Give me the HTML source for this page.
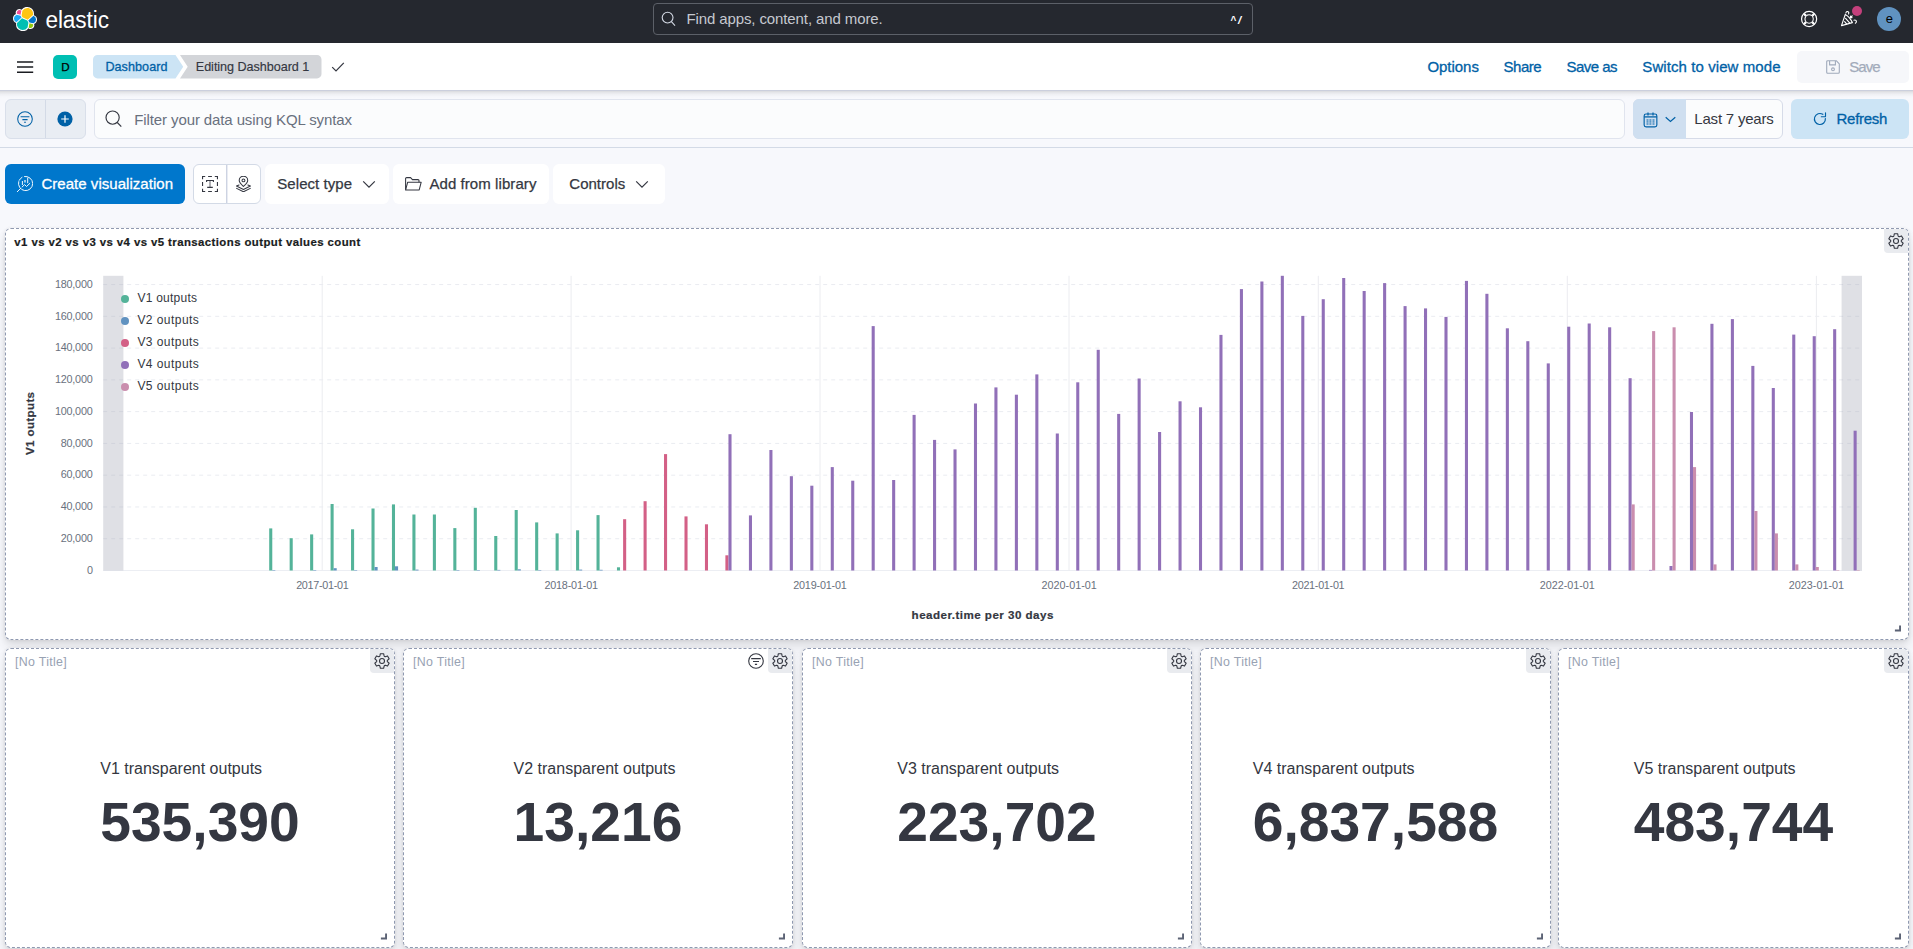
<!DOCTYPE html>
<html lang="en"><head><meta charset="utf-8"><title>Editing Dashboard 1 - Elastic</title>
<style>
html,body{margin:0;padding:0}
body{width:1913px;height:949px;overflow:hidden;position:relative;background:#f7f8fc;font-family:"Liberation Sans",sans-serif;color:#343741}
.b{position:absolute;box-sizing:border-box}
.t{position:absolute;line-height:1;white-space:nowrap}
.panel{position:absolute;box-sizing:border-box;background:#fff;border:1px dashed #8f99b0;border-radius:6px;box-shadow:0 .8px 3.6px -.9px rgba(0,0,0,.08),0 2.3px 7.2px -.9px rgba(0,0,0,.06),0 5.1px 10.8px -.9px rgba(0,0,0,.05),0 13.5px 13.5px -.9px rgba(0,0,0,.04)}
.gearbg{position:absolute;box-sizing:border-box;width:24px;height:24px;background:#e9ebef;border-radius:0 5px 0 4px}
</style></head><body>

<div class="b" style="left:0px;top:0px;width:1913px;height:43px;background:#25282f;"></div>
<svg class="b" style="left:13px;top:7px" width="24" height="24" viewBox="0 0 32 32">
<path fill="#FFF" d="M32 16.77a6.334 6.334 0 0 0-1.14-3.63 6.269 6.269 0 0 0-3.02-2.3 9.194 9.194 0 0 0 .16-1.69A9.162 9.162 0 0 0 11.4 3.81a4.84 4.84 0 0 0-7.5 5.51A6.423 6.423 0 0 0 0 15.26a6.333 6.333 0 0 0 4.18 5.95 9.077 9.077 0 0 0-.16 1.69 9.143 9.143 0 0 0 16.58 5.3 4.825 4.825 0 0 0 7.5-5.5A6.433 6.433 0 0 0 32 16.77"/>
<path fill="#FEC514" d="M12.58 13.787l7.002 3.211 7.066-6.213a7.849 7.849 0 0 0 .152-1.557c0-4.287-3.473-7.763-7.759-7.763a7.735 7.735 0 0 0-6.398 3.363l-1.176 6.126 1.113 2.833z"/>
<path fill="#00BFB3" d="M5.333 21.215a8.024 8.024 0 0 0-.15 1.575c0 4.3 3.49 7.784 7.795 7.784a7.782 7.782 0 0 0 6.42-3.39l1.166-6.073-1.556-2.973-7.03-3.2-6.645 6.277z"/>
<path fill="#F04E98" d="M5.29 9.085l4.8 1.133 1.05-5.454a3.794 3.794 0 0 0-2.3-.777 3.79 3.79 0 0 0-3.55 5.098"/>
<path fill="#1BA9F5" d="M4.874 10.227a5.349 5.349 0 0 0-3.609 5.04 5.303 5.303 0 0 0 3.417 4.966l6.734-6.087-1.237-2.641-5.305-1.278z"/>
<path fill="#93C90E" d="M20.874 27.184a3.783 3.783 0 0 0 2.304.788 3.79 3.79 0 0 0 3.553-5.097l-4.798-1.122-1.059 5.431z"/>
<path fill="#07C" d="M21.849 20.563l5.282 1.235a5.37 5.37 0 0 0 3.604-5.046 5.292 5.292 0 0 0-3.423-4.953l-6.908 6.05 1.445 2.714z"/>
</svg>
<div class="t" style="left:45.40px;top:9px;font-size:22.6px;color:#fff;letter-spacing:-0.075px;transform-origin:0 18px;transform:translateY(0.5px) scaleY(1.08);">elastic</div>
<div class="b" style="left:653px;top:3px;width:600px;height:32px;background:#25282f;border:1px solid #5c6068;border-radius:4px;"></div>
<svg class="b" style="left:661px;top:11px;" width="16" height="16" viewBox="0 0 16 16"><circle cx="6.6" cy="6.6" r="5.4" fill="none" stroke="#d4dae5" stroke-width="1.1"/><path d="M10.4 10.6 L14 14.6" stroke="#d4dae5" stroke-width="1.1" fill="none"/></svg>
<div class="t" style="left:686.40px;top:11px;font-size:15px;color:#c5c9d0;letter-spacing:-0.107px;">Find apps, content, and more.</div>
<div class="t" style="left:1230.50px;top:16px;font-size:10px;color:#fff;font-weight:700;">^</div>
<div class="t" style="left:1238.00px;top:15px;font-size:11.5px;color:#fff;font-weight:700;font-style:italic;">/</div>
<svg class="b" style="left:1800px;top:10px;" width="18" height="18" viewBox="0 0 18 18"><g fill="none" stroke="#fff"><circle cx="9.1" cy="9" r="7.55" stroke-width="1.2"/><circle cx="9.1" cy="9" r="4.05" stroke-width="1.3"/>
<path d="M12.21 12.11 L14.26 14.16 M5.99 12.11 L3.94 14.16 M5.99 5.89 L3.94 3.84 M12.21 5.89 L14.26 3.84" stroke-width="2.2"/></g><circle cx="9.1" cy="9" r="3.4" fill="#25282f"/></svg>
<svg class="b" style="left:1840px;top:10px;" width="18" height="18" viewBox="0 0 18 18"><g fill="none" stroke="#fff" stroke-width="1.15" stroke-linecap="round" stroke-linejoin="round">
<path d="M1.5 15.6 L5.3 4.4 Q9.6 6.6 12.4 12.6 Z"/><path d="M5.6 8.4 L9.6 12.9 M4.6 11.6 L6.6 13.9"/>
<path d="M5.9 3.0 Q6.3 1.2 7.9 1.6 Q9.3 2.2 8.6 4.0"/><path d="M13.9 10.2 Q15.9 9.6 16.4 11.2 Q16.6 12.6 15.4 13.2"/><path d="M10.4 7.6 L12.2 5.9 M10.4 7.6 L10.6 6.0 M10.4 7.6 L12.0 7.6"/></g></svg>
<div class="b" style="left:1851.7px;top:5.6px;width:10.6px;height:10.6px;border-radius:50%;background:#c4407c"></div>
<div class="b" style="left:1877px;top:7px;width:24px;height:24px;border-radius:50%;background:#6092c0"></div>
<div class="t" style="left:1885.80px;top:12px;font-size:13px;color:#000;">e</div>
<div class="b" style="left:0px;top:43px;width:1913px;height:47px;background:#fff;"></div>
<div class="b" style="left:0px;top:90px;width:1913px;height:1px;background:#cbcfdd;"></div>
<div class="b" style="left:0px;top:91px;width:1913px;height:7px;background:linear-gradient(to bottom, rgba(0,0,0,.125) 0, rgba(0,0,0,.105) 7%, rgba(0,0,0,.075) 21%, rgba(0,0,0,.05) 36%, rgba(0,0,0,.032) 50%, rgba(0,0,0,.018) 64%, rgba(0,0,0,.008) 80%, rgba(0,0,0,0) 100%);"></div>
<svg class="b" style="left:16px;top:59px;" width="18" height="16" viewBox="0 0 18 16"><path d="M1 2.9 H17.2 M1 8.1 H17.2 M1 13.3 H17.2" stroke="#1a1c21" stroke-width="1.5" fill="none"/></svg>
<div class="b" style="left:53px;top:55px;width:24px;height:24px;background:#00bfb3;border-radius:5px;"></div>
<div class="t" style="left:61.20px;top:61px;font-size:11.6px;color:#000;-webkit-text-stroke:0.25px #000;">D</div>
<svg class="b" style="left:93px;top:55px;" width="230" height="24" viewBox="0 0 230 24"><path d="M4.5 0 H82.5 L90.2 11.7 L82.5 23.4 H4.5 A4.5 4.5 0 0 1 0 18.9 V4.5 A4.5 4.5 0 0 1 4.5 0 Z" fill="#cce4f5"/>
<path d="M87 0 H224 A4.5 4.5 0 0 1 228.5 4.5 V18.9 A4.5 4.5 0 0 1 224 23.4 H87 L94.7 11.7 Z" fill="#d3d5d9"/></svg>
<div class="t" style="left:105.40px;top:61px;font-size:12.6px;color:#0061a6;letter-spacing:0.058px;-webkit-text-stroke:0.3px #0061a6;">Dashboard</div>
<div class="t" style="left:195.80px;top:61px;font-size:12.6px;color:#343741;letter-spacing:-0.038px;-webkit-text-stroke:0.15px #343741;">Editing Dashboard 1</div>
<svg class="b" style="left:331px;top:61px;" width="14" height="12" viewBox="0 0 14 12"><path d="M1.2 6.2 L5 10 L12.8 1.8" stroke="#343741" stroke-width="1.2" fill="none"/></svg>
<div class="t" style="left:1427.40px;top:59px;font-size:15px;color:#0061a6;letter-spacing:-0.032px;-webkit-text-stroke:0.3px #0061a6;">Options</div>
<div class="t" style="left:1503.60px;top:59px;font-size:15px;color:#0061a6;letter-spacing:-0.505px;-webkit-text-stroke:0.3px #0061a6;">Share</div>
<div class="t" style="left:1566.40px;top:59px;font-size:15px;color:#0061a6;letter-spacing:-0.516px;-webkit-text-stroke:0.3px #0061a6;">Save as</div>
<div class="t" style="left:1642.30px;top:59px;font-size:15px;color:#0061a6;letter-spacing:0.082px;-webkit-text-stroke:0.3px #0061a6;">Switch to view mode</div>
<div class="b" style="left:1797px;top:51px;width:112px;height:32px;background:#f6f7fa;border-radius:5px;"></div>
<svg class="b" style="left:1826px;top:60px;" width="14" height="14" viewBox="0 0 14 14"><g fill="none" stroke="#a0aabb" stroke-width="1.1" stroke-linejoin="round"><path d="M0.7 1.7 A1 1 0 0 1 1.7 0.7 H10.2 L13.3 3.8 V12.3 A1 1 0 0 1 12.3 13.3 H1.7 A1 1 0 0 1 0.7 12.3 Z"/><path d="M3.6 0.9 V4.9 H9.4 V0.9"/><circle cx="7" cy="9.3" r="1.4"/></g></svg>
<div class="t" style="left:1849.30px;top:59px;font-size:15px;color:#a2abba;letter-spacing:-0.962px;-webkit-text-stroke:0.25px #a2abba;">Save</div>
<div class="b" style="left:0px;top:147px;width:1913px;height:1px;background:#d3dae6;"></div>
<div class="b" style="left:5px;top:99px;width:81px;height:40px;background:#e9edf3;border:1px solid #d9dfea;border-radius:6px;"></div>
<div class="b" style="left:45px;top:100px;width:1px;height:38px;background:#d3dae6;"></div>
<svg class="b" style="left:17px;top:111px;" width="16" height="16" viewBox="0 0 16 16"><g fill="none" stroke="#0061a6" stroke-width="1.05"><circle cx="8" cy="8" r="7.3"/><path d="M3.6 5.8 H12.4 M5.4 8.6 H10.6 M7.1 11.3 H8.9"/></g></svg>
<svg class="b" style="left:57.2px;top:110.5px;" width="16" height="16" viewBox="0 0 16 16"><circle cx="8" cy="8" r="7.6" fill="#0061a6"/><path d="M8 4.2 V11.8 M4.2 8 H11.8" stroke="#fff" stroke-width="1.2"/></svg>
<div class="b" style="left:94px;top:99px;width:1531px;height:40px;background:#fbfcfd;border:1px solid #e0e4ee;border-radius:6px;"></div>
<svg class="b" style="left:105.4px;top:110.0px;" width="18" height="18" viewBox="0 0 18 18"><circle cx="7.6" cy="7.6" r="6.6" fill="none" stroke="#343741" stroke-width="1.15"/><path d="M12.3 12.5 L16.3 16.6" stroke="#343741" stroke-width="1.15" fill="none"/></svg>
<div class="t" style="left:134.30px;top:112px;font-size:15px;color:#69707d;letter-spacing:-0.110px;">Filter your data using KQL syntax</div>
<div class="b" style="left:1633px;top:99px;width:150px;height:40px;background:#fbfcfd;border:1px solid #d6dbe8;border-radius:6px;"></div>
<div class="b" style="left:1633px;top:99px;width:53px;height:40px;background:#cfdff0;border-radius:6px 0 0 6px;"></div>
<svg class="b" style="left:1642.5px;top:111.5px;" width="15" height="16" viewBox="0 0 15 16"><g fill="none" stroke="#0061a6" stroke-width="1.15"><rect x="1.15" y="2.0" width="12.7" height="12.9" rx="1.9"/><path d="M1.2 4.9 H13.8" stroke-width="1.3"/><path d="M5.0 0.4 V3.4 M10.0 0.4 V3.4" stroke-width="1.25"/></g>
<g fill="#0061a6"><rect x="3.5" y="7.5" width="2" height="1"/><rect x="6.4" y="7.5" width="2" height="1"/><rect x="9.5" y="7.5" width="2" height="1"/><rect x="3.5" y="9.45" width="2" height="1"/><rect x="6.4" y="9.45" width="2" height="1"/><rect x="9.5" y="9.45" width="2" height="1"/><rect x="3.5" y="11.5" width="2" height="1"/><rect x="6.4" y="11.5" width="2" height="1"/><rect x="9.5" y="11.5" width="2" height="1"/></g></svg>
<svg class="b" style="left:1664.5px;top:115.5px;" width="11" height="8" viewBox="0 0 11 8"><path d="M0.7 1.2 L5.45 5.5 L10.3 1.2" fill="none" stroke="#0061a6" stroke-width="1.2"/></svg>
<div class="t" style="left:1694.30px;top:111px;font-size:15px;color:#343741;letter-spacing:-0.200px;">Last 7 years</div>
<div class="b" style="left:1791px;top:99px;width:118px;height:40px;background:#cce4f5;border-radius:6px;"></div>
<svg class="b" style="left:1813px;top:111.5px;" width="14" height="14" viewBox="0 0 14 14"><g fill="none" stroke="#0061a6" stroke-width="1.15" stroke-linecap="round"><path d="M9.81 2.34 A5.5 5.5 0 1 0 12.38 6.52"/><path d="M12.5 0.7 V4.15 Q12.5 4.75 11.9 4.75 H8.3"/></g></svg>
<div class="t" style="left:1836.60px;top:111px;font-size:15px;color:#0061a6;letter-spacing:-0.302px;-webkit-text-stroke:0.3px #0061a6;">Refresh</div>
<div class="b" style="left:5px;top:164px;width:180px;height:40px;background:#0077cc;border-radius:6px;"></div>
<svg class="b" style="left:17px;top:176px;" width="16" height="16" viewBox="0 0 16 16"><g fill="none" stroke="#fff" stroke-width="0.95" stroke-linecap="round" stroke-linejoin="round"><path d="M7.56 0.47 A7.1 7.1 0 1 1 1.69 5.66"/><path d="M2.22 4.28 A7.1 7.1 0 0 1 5.0 1.35"/><path d="M3.6 12.4 L0.3 15.7"/><path d="M5.4 5.4 V8.6 M10.7 2.0 V6.8"/><path d="M8.0 4.0 V6.4" stroke-width="1.5" stroke-opacity=".8" stroke-linecap="butt"/><path d="M5.1 11 L7.6 8.6 L9.5 10.5 L12.8 7.4"/></g></svg>
<div class="t" style="left:41.40px;top:176px;font-size:15px;color:#fff;letter-spacing:0.037px;-webkit-text-stroke:0.3px #fff;">Create visualization</div>
<div class="b" style="left:193px;top:164px;width:68px;height:40px;background:#fff;border:1px solid #d3dae6;border-radius:6px;"></div>
<div class="b" style="left:226px;top:165px;width:1px;height:38px;background:#cdd3e2;"></div>
<div class="b" style="left:227px;top:165px;width:1px;height:38px;background:#e9ecf3;"></div>
<svg class="b" style="left:202px;top:176px;" width="16" height="16" viewBox="0 0 16 16"><g fill="none" stroke="#343741" stroke-width="1.1"><path d="M0.55 3.2 V0.55 H3.2 M6.1 0.55 H9.9 M12.8 0.55 H15.45 V3.2 M15.45 6.1 V9.9 M15.45 12.8 V15.45 H12.8 M9.9 15.45 H6.1 M3.2 15.45 H0.55 V12.8 M0.55 9.9 V6.1"/><path d="M4.6 5.9 V4.5 H11.4 V5.9 M5.2 11.4 H10.8"/><path d="M8 4.5 V11.4" stroke-opacity=".6" stroke-width="1.3"/></g></svg>
<svg class="b" style="left:236.1px;top:176px;" width="15" height="16.4" viewBox="0 0 15 16.4"><g fill="none" stroke="#343741" stroke-width="1.05" stroke-linejoin="round" stroke-linecap="round"><path d="M7.46 10.5 C5.2 8.3 3.2 6.4 3.2 4.4 A4.26 4.26 0 0 1 11.72 4.4 C11.72 6.4 9.7 8.3 7.46 10.5 Z"/><circle cx="7.46" cy="4.4" r="1.45"/><path d="M3.0 9.0 L0.5 10.1 L7.46 13.5 L14.4 10.1 L11.9 9.0"/><path d="M0.6 12.4 L7.46 15.8 L14.3 12.4"/></g></svg>
<div class="b" style="left:265px;top:164px;width:124px;height:40px;background:#fff;border-radius:6px;"></div>
<div class="t" style="left:277.30px;top:176px;font-size:15px;color:#343741;letter-spacing:0.060px;-webkit-text-stroke:0.25px #343741;">Select type</div>
<svg class="b" style="left:362px;top:180px;" width="14" height="9" viewBox="0 0 14 9"><path d="M1.2 1.3 L7 7.2 L12.8 1.3" fill="none" stroke="#343741" stroke-width="1.2"/></svg>
<div class="b" style="left:393px;top:164px;width:156px;height:40px;background:#fff;border-radius:6px;"></div>
<svg class="b" style="left:404.5px;top:177px;" width="17" height="14" viewBox="0 0 17 14"><g fill="none" stroke="#343741" stroke-width="1.05" stroke-linejoin="round"><path d="M0.6 12.6 V1.6 A1 1 0 0 1 1.6 0.6 H5.6 L7.4 2.6 H13 A1 1 0 0 1 14 3.6 V5.2"/><path d="M0.6 12.9 L2.7 5.2 H16.2 L14.2 12.9 Z"/></g></svg>
<div class="t" style="left:429.40px;top:176px;font-size:15px;color:#343741;letter-spacing:0.075px;-webkit-text-stroke:0.25px #343741;">Add from library</div>
<div class="b" style="left:553px;top:164px;width:112px;height:40px;background:#fff;border-radius:6px;"></div>
<div class="t" style="left:569.30px;top:176px;font-size:15px;color:#343741;letter-spacing:0.020px;-webkit-text-stroke:0.25px #343741;">Controls</div>
<svg class="b" style="left:634.5px;top:180px;" width="14" height="9" viewBox="0 0 14 9"><path d="M1.2 1.3 L7 7.2 L12.8 1.3" fill="none" stroke="#343741" stroke-width="1.2"/></svg>
<div class="panel" style="left:5px;top:228px;width:1904px;height:412px"></div>
<div class="t" style="left:14.30px;top:237px;font-size:11.4px;color:#1a1c21;font-weight:700;letter-spacing:0.419px;-webkit-text-stroke:0.2px #1a1c21;">v1 vs v2 vs v3 vs v4 vs v5 transactions output values count</div>
<div class="gearbg" style="left:1884px;top:229px"></div>
<svg class="b" style="left:1888px;top:233px;" width="16" height="16" viewBox="0 0 16 16"><g fill="none" stroke="#343741" stroke-width="1.1" stroke-linejoin="round"><path d="M5.87 2.98 L6.38 0.68 L9.62 0.68 L10.13 2.98 A1.25 1.25 0 0 0 11.28 3.65 L13.53 2.93 L15.15 5.74 L13.41 7.34 A1.25 1.25 0 0 0 13.41 8.66 L15.15 10.26 L13.53 13.07 L11.28 12.35 A1.25 1.25 0 0 0 10.13 13.02 L9.62 15.32 L6.38 15.32 L5.87 13.02 A1.25 1.25 0 0 0 4.72 12.35 L2.47 13.07 L0.85 10.26 L2.59 8.66 A1.25 1.25 0 0 0 2.59 7.34 L0.85 5.74 L2.47 2.93 L4.72 3.65 A1.25 1.25 0 0 0 5.87 2.98 Z"/><circle cx="8" cy="8" r="2.5"/></g></svg>
<svg class="b" style="left:1894px;top:625px;" width="7" height="7" viewBox="0 0 7 7"><path d="M6.05 0.5 V5.5 H0.9" fill="none" stroke="#5c6375" stroke-width="1.9"/></svg>
<svg class="b" style="left:0;top:0" width="1913" height="640" viewBox="0 0 1913 640" shape-rendering="auto"><path d="M103.2 570.50 H1862.0" stroke="#eceef3" stroke-width="1"/><path d="M103.2 538.73 H1862.0" stroke="#eaecf1" stroke-width="1" stroke-dasharray="4 4"/><path d="M103.2 506.96 H1862.0" stroke="#eaecf1" stroke-width="1" stroke-dasharray="4 4"/><path d="M103.2 475.18 H1862.0" stroke="#eaecf1" stroke-width="1" stroke-dasharray="4 4"/><path d="M103.2 443.41 H1862.0" stroke="#eaecf1" stroke-width="1" stroke-dasharray="4 4"/><path d="M103.2 411.64 H1862.0" stroke="#eaecf1" stroke-width="1" stroke-dasharray="4 4"/><path d="M103.2 379.87 H1862.0" stroke="#eaecf1" stroke-width="1" stroke-dasharray="4 4"/><path d="M103.2 348.10 H1862.0" stroke="#eaecf1" stroke-width="1" stroke-dasharray="4 4"/><path d="M103.2 316.32 H1862.0" stroke="#eaecf1" stroke-width="1" stroke-dasharray="4 4"/><path d="M103.2 284.55 H1862.0" stroke="#eaecf1" stroke-width="1" stroke-dasharray="4 4"/><path d="M322.2 275.8 V570.5" stroke="#ebecf0" stroke-width="1"/><path d="M571.1 275.8 V570.5" stroke="#ebecf0" stroke-width="1"/><path d="M820.0 275.8 V570.5" stroke="#ebecf0" stroke-width="1"/><path d="M1069.0 275.8 V570.5" stroke="#ebecf0" stroke-width="1"/><path d="M1318.3 275.8 V570.5" stroke="#ebecf0" stroke-width="1"/><path d="M1567.3 275.8 V570.5" stroke="#ebecf0" stroke-width="1"/><path d="M1816.4 275.8 V570.5" stroke="#ebecf0" stroke-width="1"/><rect x="103.2" y="275.8" width="20.2" height="294.70" fill="#a5a9b8" fill-opacity="0.36"/><rect x="1841.6" y="275.8" width="20.40" height="294.70" fill="#a5a9b8" fill-opacity="0.36"/><rect x="269.20" y="528.40" width="3.07" height="42.10" fill="#54b399"/><rect x="289.66" y="538.20" width="3.07" height="32.30" fill="#54b399"/><rect x="310.11" y="534.40" width="3.07" height="36.10" fill="#54b399"/><rect x="330.57" y="504.00" width="3.07" height="66.50" fill="#54b399"/><rect x="351.03" y="529.30" width="3.07" height="41.20" fill="#54b399"/><rect x="371.49" y="508.50" width="3.07" height="62.00" fill="#54b399"/><rect x="391.94" y="504.40" width="3.07" height="66.10" fill="#54b399"/><rect x="412.40" y="514.50" width="3.07" height="56.00" fill="#54b399"/><rect x="432.86" y="514.50" width="3.07" height="56.00" fill="#54b399"/><rect x="453.31" y="528.10" width="3.07" height="42.40" fill="#54b399"/><rect x="473.77" y="507.80" width="3.07" height="62.70" fill="#54b399"/><rect x="494.23" y="536.00" width="3.07" height="34.50" fill="#54b399"/><rect x="514.68" y="510.00" width="3.07" height="60.50" fill="#54b399"/><rect x="535.14" y="522.40" width="3.07" height="48.10" fill="#54b399"/><rect x="555.60" y="533.40" width="3.07" height="37.10" fill="#54b399"/><rect x="576.06" y="530.30" width="3.07" height="40.20" fill="#54b399"/><rect x="596.51" y="515.10" width="3.07" height="55.40" fill="#54b399"/><rect x="616.97" y="567.30" width="3.07" height="3.20" fill="#54b399"/><rect x="272.27" y="570.00" width="3.07" height="0.50" fill="#6092c0"/><rect x="313.18" y="570.00" width="3.07" height="0.50" fill="#6092c0"/><rect x="333.64" y="568.20" width="3.07" height="2.30" fill="#6092c0"/><rect x="354.10" y="570.00" width="3.07" height="0.50" fill="#6092c0"/><rect x="374.56" y="567.00" width="3.07" height="3.50" fill="#6092c0"/><rect x="395.01" y="566.30" width="3.07" height="4.20" fill="#6092c0"/><rect x="415.47" y="569.60" width="3.07" height="0.90" fill="#6092c0"/><rect x="456.38" y="570.00" width="3.07" height="0.50" fill="#6092c0"/><rect x="476.84" y="570.00" width="3.07" height="0.50" fill="#6092c0"/><rect x="497.30" y="569.90" width="3.07" height="0.60" fill="#6092c0"/><rect x="517.75" y="569.30" width="3.07" height="1.20" fill="#6092c0"/><rect x="538.21" y="570.00" width="3.07" height="0.50" fill="#6092c0"/><rect x="579.13" y="569.60" width="3.07" height="0.90" fill="#6092c0"/><rect x="599.58" y="569.80" width="3.07" height="0.70" fill="#6092c0"/><rect x="623.11" y="519.20" width="3.07" height="51.30" fill="#d36086"/><rect x="643.57" y="501.20" width="3.07" height="69.30" fill="#d36086"/><rect x="664.02" y="454.10" width="3.07" height="116.40" fill="#d36086"/><rect x="684.48" y="516.40" width="3.07" height="54.10" fill="#d36086"/><rect x="704.94" y="524.30" width="3.07" height="46.20" fill="#d36086"/><rect x="725.39" y="555.30" width="3.07" height="15.20" fill="#d36086"/><rect x="728.46" y="434.20" width="3.07" height="136.30" fill="#9170b8"/><rect x="748.92" y="515.40" width="3.07" height="55.10" fill="#9170b8"/><rect x="769.38" y="450.00" width="3.07" height="120.50" fill="#9170b8"/><rect x="789.84" y="476.20" width="3.07" height="94.30" fill="#9170b8"/><rect x="810.29" y="485.70" width="3.07" height="84.80" fill="#9170b8"/><rect x="830.75" y="467.10" width="3.07" height="103.40" fill="#9170b8"/><rect x="851.21" y="480.70" width="3.07" height="89.80" fill="#9170b8"/><rect x="871.66" y="326.10" width="3.07" height="244.40" fill="#9170b8"/><rect x="892.12" y="480.00" width="3.07" height="90.50" fill="#9170b8"/><rect x="912.58" y="414.90" width="3.07" height="155.60" fill="#9170b8"/><rect x="933.03" y="439.90" width="3.07" height="130.60" fill="#9170b8"/><rect x="953.49" y="449.40" width="3.07" height="121.10" fill="#9170b8"/><rect x="973.95" y="403.50" width="3.07" height="167.00" fill="#9170b8"/><rect x="994.40" y="387.40" width="3.07" height="183.10" fill="#9170b8"/><rect x="1014.86" y="394.70" width="3.07" height="175.80" fill="#9170b8"/><rect x="1035.32" y="374.40" width="3.07" height="196.10" fill="#9170b8"/><rect x="1055.78" y="433.50" width="3.07" height="137.00" fill="#9170b8"/><rect x="1076.23" y="382.30" width="3.07" height="188.20" fill="#9170b8"/><rect x="1096.69" y="349.80" width="3.07" height="220.70" fill="#9170b8"/><rect x="1117.15" y="413.90" width="3.07" height="156.60" fill="#9170b8"/><rect x="1137.60" y="378.50" width="3.07" height="192.00" fill="#9170b8"/><rect x="1158.06" y="432.00" width="3.07" height="138.50" fill="#9170b8"/><rect x="1178.52" y="401.30" width="3.07" height="169.20" fill="#9170b8"/><rect x="1198.98" y="407.30" width="3.07" height="163.20" fill="#9170b8"/><rect x="1219.43" y="334.90" width="3.07" height="235.60" fill="#9170b8"/><rect x="1239.89" y="289.10" width="3.07" height="281.40" fill="#9170b8"/><rect x="1260.35" y="281.50" width="3.07" height="289.00" fill="#9170b8"/><rect x="1280.80" y="275.80" width="3.07" height="294.70" fill="#9170b8"/><rect x="1301.26" y="315.90" width="3.07" height="254.60" fill="#9170b8"/><rect x="1321.72" y="299.20" width="3.07" height="271.30" fill="#9170b8"/><rect x="1342.17" y="278.00" width="3.07" height="292.50" fill="#9170b8"/><rect x="1362.63" y="291.00" width="3.07" height="279.50" fill="#9170b8"/><rect x="1383.09" y="283.10" width="3.07" height="287.40" fill="#9170b8"/><rect x="1403.55" y="306.10" width="3.07" height="264.40" fill="#9170b8"/><rect x="1424.00" y="308.40" width="3.07" height="262.10" fill="#9170b8"/><rect x="1444.46" y="316.90" width="3.07" height="253.60" fill="#9170b8"/><rect x="1464.92" y="280.90" width="3.07" height="289.60" fill="#9170b8"/><rect x="1485.37" y="293.80" width="3.07" height="276.70" fill="#9170b8"/><rect x="1505.83" y="328.30" width="3.07" height="242.20" fill="#9170b8"/><rect x="1526.29" y="341.20" width="3.07" height="229.30" fill="#9170b8"/><rect x="1546.74" y="363.40" width="3.07" height="207.10" fill="#9170b8"/><rect x="1567.20" y="326.70" width="3.07" height="243.80" fill="#9170b8"/><rect x="1587.66" y="323.50" width="3.07" height="247.00" fill="#9170b8"/><rect x="1608.12" y="327.30" width="3.07" height="243.20" fill="#9170b8"/><rect x="1628.57" y="378.20" width="3.07" height="192.30" fill="#9170b8"/><rect x="1649.03" y="569.90" width="3.07" height="0.60" fill="#9170b8"/><rect x="1669.49" y="566.00" width="3.07" height="4.50" fill="#9170b8"/><rect x="1689.94" y="412.00" width="3.07" height="158.50" fill="#9170b8"/><rect x="1710.40" y="323.80" width="3.07" height="246.70" fill="#9170b8"/><rect x="1730.86" y="319.10" width="3.07" height="251.40" fill="#9170b8"/><rect x="1751.31" y="365.90" width="3.07" height="204.60" fill="#9170b8"/><rect x="1771.77" y="388.00" width="3.07" height="182.50" fill="#9170b8"/><rect x="1792.23" y="334.60" width="3.07" height="235.90" fill="#9170b8"/><rect x="1812.69" y="336.20" width="3.07" height="234.30" fill="#9170b8"/><rect x="1833.14" y="329.20" width="3.07" height="241.30" fill="#9170b8"/><rect x="1853.60" y="430.70" width="3.07" height="139.80" fill="#9170b8"/><rect x="1631.64" y="504.40" width="3.07" height="66.10" fill="#ca8eae"/><rect x="1652.10" y="331.10" width="3.07" height="239.40" fill="#ca8eae"/><rect x="1672.56" y="327.30" width="3.07" height="243.20" fill="#ca8eae"/><rect x="1693.01" y="467.10" width="3.07" height="103.40" fill="#ca8eae"/><rect x="1713.47" y="564.40" width="3.07" height="6.10" fill="#ca8eae"/><rect x="1754.38" y="511.00" width="3.07" height="59.50" fill="#ca8eae"/><rect x="1774.84" y="533.40" width="3.07" height="37.10" fill="#ca8eae"/><rect x="1795.30" y="564.40" width="3.07" height="6.10" fill="#ca8eae"/><rect x="1815.76" y="567.00" width="3.07" height="3.50" fill="#ca8eae"/><rect x="1836.21" y="570.00" width="3.07" height="0.50" fill="#ca8eae"/><rect x="1856.67" y="570.00" width="3.07" height="0.50" fill="#ca8eae"/></svg>
<div class="t" style="left:86.89px;top:565px;font-size:10.8px;color:#69707d;letter-spacing:-0.198px;">0</div>
<div class="t" style="left:60.75px;top:533px;font-size:10.8px;color:#69707d;letter-spacing:-0.218px;">20,000</div>
<div class="t" style="left:60.75px;top:501px;font-size:10.8px;color:#69707d;letter-spacing:-0.218px;">40,000</div>
<div class="t" style="left:60.75px;top:469px;font-size:10.8px;color:#69707d;letter-spacing:-0.218px;">60,000</div>
<div class="t" style="left:60.75px;top:438px;font-size:10.8px;color:#69707d;letter-spacing:-0.218px;">80,000</div>
<div class="t" style="left:54.95px;top:406px;font-size:10.8px;color:#69707d;letter-spacing:-0.215px;">100,000</div>
<div class="t" style="left:54.95px;top:374px;font-size:10.8px;color:#69707d;letter-spacing:-0.215px;">120,000</div>
<div class="t" style="left:54.95px;top:342px;font-size:10.8px;color:#69707d;letter-spacing:-0.215px;">140,000</div>
<div class="t" style="left:54.95px;top:311px;font-size:10.8px;color:#69707d;letter-spacing:-0.215px;">160,000</div>
<div class="t" style="left:54.95px;top:279px;font-size:10.8px;color:#69707d;letter-spacing:-0.215px;">180,000</div>
<div class="t" style="left:296.15px;top:580px;font-size:10.8px;color:#69707d;letter-spacing:-0.282px;">2017-01-01</div>
<div class="t" style="left:544.40px;top:580px;font-size:10.8px;color:#69707d;letter-spacing:-0.182px;">2018-01-01</div>
<div class="t" style="left:793.20px;top:580px;font-size:10.8px;color:#69707d;letter-spacing:-0.182px;">2019-01-01</div>
<div class="t" style="left:1041.60px;top:580px;font-size:10.8px;color:#69707d;letter-spacing:-0.005px;">2020-01-01</div>
<div class="t" style="left:1291.95px;top:580px;font-size:10.8px;color:#69707d;letter-spacing:-0.282px;">2021-01-01</div>
<div class="t" style="left:1539.70px;top:580px;font-size:10.8px;color:#69707d;letter-spacing:-0.005px;">2022-01-01</div>
<div class="t" style="left:1788.80px;top:580px;font-size:10.8px;color:#69707d;letter-spacing:-0.005px;">2023-01-01</div>
<div class="t" style="left:911.60px;top:609px;font-size:11.6px;color:#343741;font-weight:700;letter-spacing:0.467px;-webkit-text-stroke:0.2px #343741;">header.time per 30 days</div>
<div class="t" style="left:23.60px;top:455.00px;font-size:11.6px;font-weight:700;letter-spacing:0.351px;color:#343741;-webkit-text-stroke:0.2px #343741;transform-origin:0 0;transform:rotate(-90deg)">V1 outputs</div>
<div class="b" style="left:120.7px;top:294.7px;width:8.2px;height:8.2px;border-radius:50%;background:#54b399"></div>
<div class="t" style="left:137.40px;top:292px;font-size:12px;color:#343741;letter-spacing:0.248px;">V1 outputs</div>
<div class="b" style="left:120.7px;top:316.6px;width:8.2px;height:8.2px;border-radius:50%;background:#6092c0"></div>
<div class="t" style="left:137.40px;top:314px;font-size:12px;color:#343741;letter-spacing:0.448px;">V2 outputs</div>
<div class="b" style="left:120.7px;top:338.6px;width:8.2px;height:8.2px;border-radius:50%;background:#d36086"></div>
<div class="t" style="left:137.40px;top:336px;font-size:12px;color:#343741;letter-spacing:0.448px;">V3 outputs</div>
<div class="b" style="left:120.7px;top:360.5px;width:8.2px;height:8.2px;border-radius:50%;background:#9170b8"></div>
<div class="t" style="left:137.40px;top:358px;font-size:12px;color:#343741;letter-spacing:0.448px;">V4 outputs</div>
<div class="b" style="left:120.7px;top:382.5px;width:8.2px;height:8.2px;border-radius:50%;background:#ca8eae"></div>
<div class="t" style="left:137.40px;top:380px;font-size:12px;color:#343741;letter-spacing:0.448px;">V5 outputs</div>
<div class="panel" style="left:5px;top:648px;width:390px;height:300px"></div>
<div class="t" style="left:14.90px;top:656px;font-size:12.4px;color:#98a2b3;letter-spacing:0.330px;">[No Title]</div>
<div class="gearbg" style="left:370px;top:649px"></div>
<svg class="b" style="left:374px;top:653px;" width="16" height="16" viewBox="0 0 16 16"><g fill="none" stroke="#343741" stroke-width="1.1" stroke-linejoin="round"><path d="M5.87 2.98 L6.38 0.68 L9.62 0.68 L10.13 2.98 A1.25 1.25 0 0 0 11.28 3.65 L13.53 2.93 L15.15 5.74 L13.41 7.34 A1.25 1.25 0 0 0 13.41 8.66 L15.15 10.26 L13.53 13.07 L11.28 12.35 A1.25 1.25 0 0 0 10.13 13.02 L9.62 15.32 L6.38 15.32 L5.87 13.02 A1.25 1.25 0 0 0 4.72 12.35 L2.47 13.07 L0.85 10.26 L2.59 8.66 A1.25 1.25 0 0 0 2.59 7.34 L0.85 5.74 L2.47 2.93 L4.72 3.65 A1.25 1.25 0 0 0 5.87 2.98 Z"/><circle cx="8" cy="8" r="2.5"/></g></svg>
<svg class="b" style="left:380px;top:933px;" width="7" height="7" viewBox="0 0 7 7"><path d="M6.05 0.5 V5.5 H0.9" fill="none" stroke="#5c6375" stroke-width="1.9"/></svg>
<div class="t" style="left:100.23px;top:761px;font-size:16px;color:#343741;">V1 transparent outputs</div>
<div class="t" style="left:100.23px;top:795px;font-size:55.2px;color:#343741;font-weight:700;">535,390</div>
<div class="panel" style="left:403px;top:648px;width:390px;height:300px"></div>
<div class="t" style="left:412.90px;top:656px;font-size:12.4px;color:#98a2b3;letter-spacing:0.330px;">[No Title]</div>
<div class="gearbg" style="left:768px;top:649px"></div>
<svg class="b" style="left:772px;top:653px;" width="16" height="16" viewBox="0 0 16 16"><g fill="none" stroke="#343741" stroke-width="1.1" stroke-linejoin="round"><path d="M5.87 2.98 L6.38 0.68 L9.62 0.68 L10.13 2.98 A1.25 1.25 0 0 0 11.28 3.65 L13.53 2.93 L15.15 5.74 L13.41 7.34 A1.25 1.25 0 0 0 13.41 8.66 L15.15 10.26 L13.53 13.07 L11.28 12.35 A1.25 1.25 0 0 0 10.13 13.02 L9.62 15.32 L6.38 15.32 L5.87 13.02 A1.25 1.25 0 0 0 4.72 12.35 L2.47 13.07 L0.85 10.26 L2.59 8.66 A1.25 1.25 0 0 0 2.59 7.34 L0.85 5.74 L2.47 2.93 L4.72 3.65 A1.25 1.25 0 0 0 5.87 2.98 Z"/><circle cx="8" cy="8" r="2.5"/></g></svg>
<svg class="b" style="left:748px;top:653px;" width="16" height="16" viewBox="0 0 16 16"><g fill="none" stroke="#343741" stroke-width="1.1"><circle cx="8" cy="8" r="7.3"/><path d="M3.2 5.6 H12.8 M5 8.5 H11 M6.9 11.4 H9.1"/></g></svg>
<svg class="b" style="left:778px;top:933px;" width="7" height="7" viewBox="0 0 7 7"><path d="M6.05 0.5 V5.5 H0.9" fill="none" stroke="#5c6375" stroke-width="1.9"/></svg>
<div class="t" style="left:513.58px;top:761px;font-size:16px;color:#343741;">V2 transparent outputs</div>
<div class="t" style="left:513.58px;top:795px;font-size:55.2px;color:#343741;font-weight:700;">13,216</div>
<div class="panel" style="left:802px;top:648px;width:390px;height:300px"></div>
<div class="t" style="left:811.90px;top:656px;font-size:12.4px;color:#98a2b3;letter-spacing:0.330px;">[No Title]</div>
<div class="gearbg" style="left:1167px;top:649px"></div>
<svg class="b" style="left:1171px;top:653px;" width="16" height="16" viewBox="0 0 16 16"><g fill="none" stroke="#343741" stroke-width="1.1" stroke-linejoin="round"><path d="M5.87 2.98 L6.38 0.68 L9.62 0.68 L10.13 2.98 A1.25 1.25 0 0 0 11.28 3.65 L13.53 2.93 L15.15 5.74 L13.41 7.34 A1.25 1.25 0 0 0 13.41 8.66 L15.15 10.26 L13.53 13.07 L11.28 12.35 A1.25 1.25 0 0 0 10.13 13.02 L9.62 15.32 L6.38 15.32 L5.87 13.02 A1.25 1.25 0 0 0 4.72 12.35 L2.47 13.07 L0.85 10.26 L2.59 8.66 A1.25 1.25 0 0 0 2.59 7.34 L0.85 5.74 L2.47 2.93 L4.72 3.65 A1.25 1.25 0 0 0 5.87 2.98 Z"/><circle cx="8" cy="8" r="2.5"/></g></svg>
<svg class="b" style="left:1177px;top:933px;" width="7" height="7" viewBox="0 0 7 7"><path d="M6.05 0.5 V5.5 H0.9" fill="none" stroke="#5c6375" stroke-width="1.9"/></svg>
<div class="t" style="left:897.23px;top:761px;font-size:16px;color:#343741;">V3 transparent outputs</div>
<div class="t" style="left:897.23px;top:795px;font-size:55.2px;color:#343741;font-weight:700;">223,702</div>
<div class="panel" style="left:1200px;top:648px;width:351px;height:300px"></div>
<div class="t" style="left:1209.90px;top:656px;font-size:12.4px;color:#98a2b3;letter-spacing:0.330px;">[No Title]</div>
<div class="gearbg" style="left:1526px;top:649px"></div>
<svg class="b" style="left:1530px;top:653px;" width="16" height="16" viewBox="0 0 16 16"><g fill="none" stroke="#343741" stroke-width="1.1" stroke-linejoin="round"><path d="M5.87 2.98 L6.38 0.68 L9.62 0.68 L10.13 2.98 A1.25 1.25 0 0 0 11.28 3.65 L13.53 2.93 L15.15 5.74 L13.41 7.34 A1.25 1.25 0 0 0 13.41 8.66 L15.15 10.26 L13.53 13.07 L11.28 12.35 A1.25 1.25 0 0 0 10.13 13.02 L9.62 15.32 L6.38 15.32 L5.87 13.02 A1.25 1.25 0 0 0 4.72 12.35 L2.47 13.07 L0.85 10.26 L2.59 8.66 A1.25 1.25 0 0 0 2.59 7.34 L0.85 5.74 L2.47 2.93 L4.72 3.65 A1.25 1.25 0 0 0 5.87 2.98 Z"/><circle cx="8" cy="8" r="2.5"/></g></svg>
<svg class="b" style="left:1536px;top:933px;" width="7" height="7" viewBox="0 0 7 7"><path d="M6.05 0.5 V5.5 H0.9" fill="none" stroke="#5c6375" stroke-width="1.9"/></svg>
<div class="t" style="left:1252.71px;top:761px;font-size:16px;color:#343741;">V4 transparent outputs</div>
<div class="t" style="left:1252.71px;top:795px;font-size:55.2px;color:#343741;font-weight:700;">6,837,588</div>
<div class="panel" style="left:1558px;top:648px;width:351px;height:300px"></div>
<div class="t" style="left:1567.90px;top:656px;font-size:12.4px;color:#98a2b3;letter-spacing:0.330px;">[No Title]</div>
<div class="gearbg" style="left:1884px;top:649px"></div>
<svg class="b" style="left:1888px;top:653px;" width="16" height="16" viewBox="0 0 16 16"><g fill="none" stroke="#343741" stroke-width="1.1" stroke-linejoin="round"><path d="M5.87 2.98 L6.38 0.68 L9.62 0.68 L10.13 2.98 A1.25 1.25 0 0 0 11.28 3.65 L13.53 2.93 L15.15 5.74 L13.41 7.34 A1.25 1.25 0 0 0 13.41 8.66 L15.15 10.26 L13.53 13.07 L11.28 12.35 A1.25 1.25 0 0 0 10.13 13.02 L9.62 15.32 L6.38 15.32 L5.87 13.02 A1.25 1.25 0 0 0 4.72 12.35 L2.47 13.07 L0.85 10.26 L2.59 8.66 A1.25 1.25 0 0 0 2.59 7.34 L0.85 5.74 L2.47 2.93 L4.72 3.65 A1.25 1.25 0 0 0 5.87 2.98 Z"/><circle cx="8" cy="8" r="2.5"/></g></svg>
<svg class="b" style="left:1894px;top:933px;" width="7" height="7" viewBox="0 0 7 7"><path d="M6.05 0.5 V5.5 H0.9" fill="none" stroke="#5c6375" stroke-width="1.9"/></svg>
<div class="t" style="left:1633.73px;top:761px;font-size:16px;color:#343741;">V5 transparent outputs</div>
<div class="t" style="left:1633.73px;top:795px;font-size:55.2px;color:#343741;font-weight:700;">483,744</div>
</body></html>
